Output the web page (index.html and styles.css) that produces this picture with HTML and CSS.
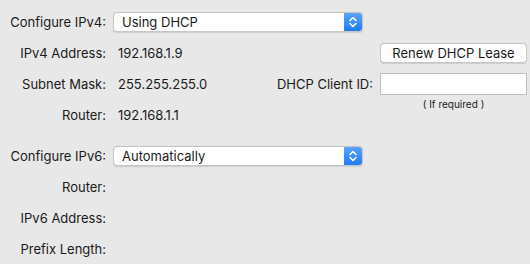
FILE: index.html
```html
<!DOCTYPE html>
<html lang="en">
<head>
  <meta charset="UTF-8" />
  <title>Network TCP/IP</title>
  <link rel="stylesheet" href="styles.css">
</head>
<body>
  <div class="pane">
    <div class="row config-row">
      <span class="label">Configure IPv4:</span>
      <div class="popup">
        <span class="popup-text">Using DHCP</span>
        <span class="popup-arrow">
          <svg width="10" height="14" viewBox="0 0 10 14"><path d="M2 5.5 L5 2.5 L8 5.5 M2 8.5 L5 11.5 L8 8.5" fill="none" stroke="#fff" stroke-width="1.5" stroke-linecap="round" stroke-linejoin="round"/></svg>
        </span>
      </div>
    </div>

    <div class="ipv4-details">
      <div class="fields">
        <div class="row"><span class="label">IPv4 Address:</span><span class="value">192.168.1.9</span></div>
        <div class="row"><span class="label">Subnet Mask:</span><span class="value">255.255.255.0</span></div>
        <div class="row"><span class="label">Router:</span><span class="value">192.168.1.1</span></div>
      </div>
      <div class="dhcp">
        <button class="renew-btn">Renew DHCP Lease</button>
        <div class="client-row">
          <span class="client-label">DHCP Client ID:</span>
          <input type="text" class="client-input" aria-label="DHCP Client ID">
        </div>
        <div class="hint">( If required )</div>
      </div>
    </div>

    <div class="row config-row v6">
      <span class="label">Configure IPv6:</span>
      <div class="popup">
        <span class="popup-text">Automatically</span>
        <span class="popup-arrow">
          <svg width="10" height="14" viewBox="0 0 10 14"><path d="M2 5.5 L5 2.5 L8 5.5 M2 8.5 L5 11.5 L8 8.5" fill="none" stroke="#fff" stroke-width="1.5" stroke-linecap="round" stroke-linejoin="round"/></svg>
        </span>
      </div>
    </div>

    <div class="fields">
      <div class="row"><span class="label">Router:</span><span class="value"></span></div>
      <div class="row"><span class="label">IPv6 Address:</span><span class="value"></span></div>
      <div class="row"><span class="label">Prefix Length:</span><span class="value"></span></div>
    </div>
  </div>
</body>
</html>
```

FILE: styles.css
```css
* { box-sizing: border-box; }
body {
  margin: 0;
  background-color: #e8e8e8;
  color: #1a1a1a;
  font-family: 'Inter', 'Liberation Sans', sans-serif;
  font-size: 13px;
}
.pane {
  padding-top: 12px;
}
.row {
  display: flex;
  align-items: center;
  height: 31px;
}
.config-row {
  height: 20px;
}
.config-row.v6 {
  margin-top: 16px;
  margin-bottom: 5px;
}
.label {
  width: 106px;
  text-align: right;
  flex-shrink: 0;
}
.value {
  margin-left: 12px;
}
.popup {
  margin-left: 7px;
  width: 250px;
  height: 20px;
  display: flex;
  background-color: #fff;
  border: 1px solid #c6c6c6;
  border-radius: 4px;
  box-shadow: 0 0.5px 1px rgba(0, 0, 0, 0.12);
  overflow: hidden;
}
.popup-text {
  flex: 1;
  padding-left: 8px;
  line-height: 18px;
}
.popup-arrow {
  width: 18px;
  display: flex;
  align-items: center;
  justify-content: center;
  background: linear-gradient(#5aa5fb, #1f7cf6);
}
.ipv4-details {
  display: flex;
  margin-top: 5px;
}
.ipv4-details .fields {
  width: 270px;
}
.dhcp {
  margin-left: auto;
  margin-right: 3px;
  display: flex;
  flex-direction: column;
  align-items: flex-end;
}
.renew-btn {
  width: 147px;
  height: 20px;
  margin-top: 6px;
  font-family: inherit;
  font-size: 13px;
  color: #1a1a1a;
  background-color: #fff;
  border: 1px solid #c6c6c6;
  border-radius: 4px;
  box-shadow: 0 0.5px 1px rgba(0, 0, 0, 0.12);
  padding: 0;
}
.client-row {
  display: flex;
  align-items: center;
  margin-top: 10px;
}
.client-label {
  margin-right: 7px;
}
.client-input {
  width: 147px;
  height: 22px;
  border: 1px solid #bdbdbd;
  background-color: #fff;
  margin: 0;
}
.hint {
  width: 147px;
  text-align: center;
  font-size: 10px;
  margin-top: 3px;
}
```
